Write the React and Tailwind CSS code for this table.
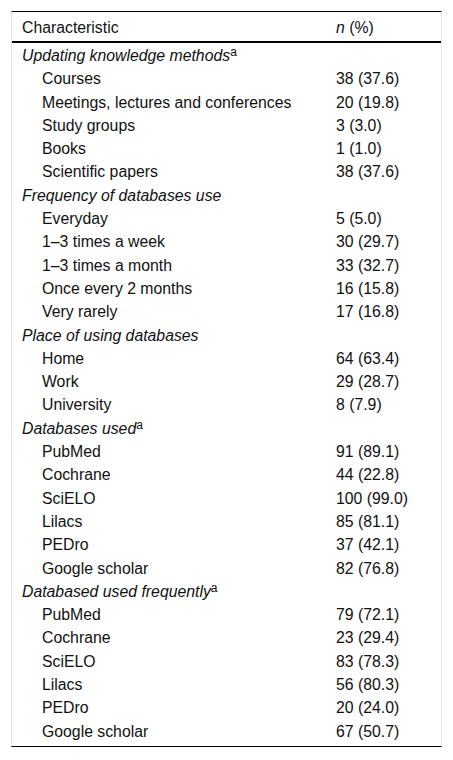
import React from 'react';

const sections = [
  {
    title: 'Updating knowledge methods',
    sup: true,
    rows: [
      ['Courses', '38 (37.6)'],
      ['Meetings, lectures and conferences', '20 (19.8)'],
      ['Study groups', '3 (3.0)'],
      ['Books', '1 (1.0)'],
      ['Scientific papers', '38 (37.6)'],
    ],
  },
  {
    title: 'Frequency of databases use',
    rows: [
      ['Everyday', '5 (5.0)'],
      ['1–3 times a week', '30 (29.7)'],
      ['1–3 times a month', '33 (32.7)'],
      ['Once every 2 months', '16 (15.8)'],
      ['Very rarely', '17 (16.8)'],
    ],
  },
  {
    title: 'Place of using databases',
    rows: [
      ['Home', '64 (63.4)'],
      ['Work', '29 (28.7)'],
      ['University', '8 (7.9)'],
    ],
  },
  {
    title: 'Databases used',
    sup: true,
    rows: [
      ['PubMed', '91 (89.1)'],
      ['Cochrane', '44 (22.8)'],
      ['SciELO', '100 (99.0)'],
      ['Lilacs', '85 (81.1)'],
      ['PEDro', '37 (42.1)'],
      ['Google scholar', '82 (76.8)'],
    ],
  },
  {
    title: 'Databased used frequently',
    sup: true,
    rows: [
      ['PubMed', '79 (72.1)'],
      ['Cochrane', '23 (29.4)'],
      ['SciELO', '83 (78.3)'],
      ['Lilacs', '56 (80.3)'],
      ['PEDro', '20 (24.0)'],
      ['Google scholar', '67 (50.7)'],
    ],
  },
];

const App = () => {
  return (
    <div className="bg-white w-[453px] h-[760px] pt-[11px] px-[11px] font-['Liberation_Sans',Arial,sans-serif] text-[15.8px] text-[#111]">
      <div className="border-t border-b border-t-black border-b-black border-x border-x-[#e6e6e6] pb-[3px]">
        {/* header */}
        <div className="flex h-[31px] leading-[31px] border-b-2 border-black mb-[1px]">
          <div className="w-[324px] pl-[10px]">Characteristic</div>
          <div><span className="italic">n</span> (%)</div>
        </div>
        {sections.map((sec) => (
          <div key={sec.title}>
            <div className="h-[23.31px] leading-[23.31px] pl-[10px] italic">
              {sec.title}
              {sec.sup && <sup className="text-[12px] not-italic top-[-5px]">a</sup>}
            </div>
            {sec.rows.map(([label, val]) => (
              <div key={label} className="flex h-[23.31px] leading-[23.31px]">
                <div className="w-[324px] pl-[30px]">{label}</div>
                <div>{val}</div>
              </div>
            ))}
          </div>
        ))}
      </div>
    </div>
  );
};

export default App;
